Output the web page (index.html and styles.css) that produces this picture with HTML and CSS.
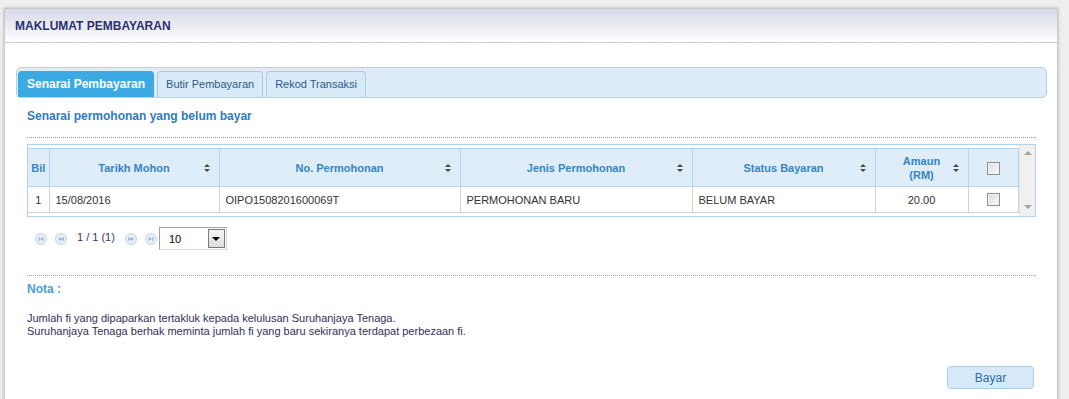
FILE: index.html
```html
<!DOCTYPE html>
<html lang="ms">

<head>
    <meta charset="UTF-8">
    <title>Maklumat Pembayaran</title>
    <link rel="stylesheet" href="styles.css">
</head>

<body>
    <div class="panel">
        <!-- Panel header -->
        <div class="panel-header">MAKLUMAT PEMBAYARAN</div>

        <div class="panel-body">
            <!-- Tabs -->
            <div class="tabs">
                <div class="tab active">Senarai Pembayaran</div>
                <div class="tab">Butir Pembayaran</div>
                <div class="tab">Rekod Transaksi</div>
            </div>

            <div class="tab-content">
                <h3 class="section-title">Senarai permohonan yang belum bayar</h3>

                <!-- Grid -->
                <div class="grid-wrap">
                    <div class="grid-body">
                        <table class="grid">
                            <colgroup>
                                <col style="width:21px">
                                <col style="width:170px">
                                <col style="width:241px">
                                <col style="width:232px">
                                <col style="width:183px">
                                <col style="width:93px">
                                <col style="width:50px">
                            </colgroup>
                            <thead>
                                <tr>
                                    <th>Bil</th>
                                    <th class="sortable">Tarikh Mohon<span class="sort"></span></th>
                                    <th class="sortable">No. Permohonan<span class="sort"></span></th>
                                    <th class="sortable">Jenis Permohonan<span class="sort"></span></th>
                                    <th class="sortable">Status Bayaran<span class="sort"></span></th>
                                    <th class="sortable">Amaun<br>(RM)<span class="sort"></span></th>
                                    <th><span class="check"></span></th>
                                </tr>
                            </thead>
                            <tbody>
                                <tr>
                                    <td class="center">1</td>
                                    <td>15/08/2016</td>
                                    <td>OIPO1508201600069T</td>
                                    <td>PERMOHONAN BARU</td>
                                    <td>BELUM BAYAR</td>
                                    <td class="center">20.00</td>
                                    <td class="center"><span class="check"></span></td>
                                </tr>
                            </tbody>
                        </table>
                    </div>
                    <div class="scrollbar">
                        <span class="arrow-up"></span>
                        <span class="arrow-down"></span>
                    </div>
                </div>

                <!-- Pager -->
                <div class="pager">
                    <span class="pg-btn">
                        <svg width="12" height="12" viewBox="0 0 12 12"><circle cx="6" cy="6" r="5.5" fill="#e6eef8" stroke="#c2d5ea"/><path d="M3.6 4h1.1v4H3.6zM8.4 4v4L5 6z" fill="#98b3d1"/></svg>
                    </span>
                    <span class="pg-btn">
                        <svg width="12" height="12" viewBox="0 0 12 12"><circle cx="6" cy="6" r="5.5" fill="#e6eef8" stroke="#c2d5ea"/><path d="M6 4v4L3.1 6zM8.9 4v4L6 6z" fill="#98b3d1"/></svg>
                    </span>
                    <span class="pg-text">1 / 1 (1)</span>
                    <span class="pg-btn">
                        <svg width="12" height="12" viewBox="0 0 12 12"><circle cx="6" cy="6" r="5.5" fill="#e6eef8" stroke="#c2d5ea"/><path d="M3.1 4v4L6 6zM6 4v4l2.9-2z" fill="#98b3d1"/></svg>
                    </span>
                    <span class="pg-btn">
                        <svg width="12" height="12" viewBox="0 0 12 12"><circle cx="6" cy="6" r="5.5" fill="#e6eef8" stroke="#c2d5ea"/><path d="M3.6 4v4L7 6zM7.3 4h1.1v4H7.3z" fill="#98b3d1"/></svg>
                    </span>
                    <div class="select">
                        <span class="select-value">10</span>
                        <span class="select-btn"></span>
                    </div>
                </div>

                <!-- Nota -->
                <div class="nota">
                    <h4>Nota :</h4>
                    <p>Jumlah fi yang dipaparkan tertakluk kepada kelulusan Suruhanjaya Tenaga.<br>
                        Suruhanjaya Tenaga berhak meminta jumlah fi yang baru sekiranya terdapat perbezaan fi.</p>
                </div>

                <div class="actions">
                    <button class="btn">Bayar</button>
                </div>
            </div>
        </div>
    </div>
</body>

</html>
```

FILE: styles.css
```css
/* Global */
* {
    margin: 0;
    padding: 0;
    box-sizing: border-box;
}

body {
    background: #eeeeee;
    font-family: "Liberation Sans", Arial, sans-serif;
    font-size: 11px;
    color: #333;
}

/* Panel */
.panel {
    margin: 8px 11px 0 4px;
    background: #fff;
    border: 1px solid #c9c9c9;
    border-bottom: none;
    box-shadow: 0 0 3px rgba(0, 0, 0, 0.25);
    height: 400px;
}

.panel-header {
    height: 34px;
    line-height: 34px;
    padding-left: 10px;
    font-size: 12px;
    font-weight: bold;
    color: #2b3170;
    background: linear-gradient(#d6d9e6, #ffffff);
    border-bottom: 1px dashed #c8c8c8;
}

.panel-body {
    padding: 24px 10px 0 11px;
}

/* Tabs */
.tabs {
    display: flex;
    gap: 3px;
    height: 31px;
    padding: 3px 0 0 1px;
    background: #ddecf8;
    border: 1px solid #b3d3ec;
    border-radius: 5px;
}

.tab {
    height: 26px;
    line-height: 25px;
    padding: 0 8px;
    font-size: 11px;
    color: #2c5a8a;
    background: #d8eaf8;
    border: 1px solid #a9cce9;
    border-bottom: none;
    border-radius: 4px 4px 0 0;
}

.tab.active {
    padding: 0 8px;
    font-size: 12px;
    font-weight: bold;
    color: #fff;
    background: #3baae3;
    border-color: #3baae3;
}

.tab-content {
    padding: 10px 11px 0 11px;
}

.section-title {
    font-size: 12px;
    line-height: 16px;
    color: #2f7bbd;
    padding-bottom: 13px;
    border-bottom: 1px dotted #9a9a9a;
}

/* Grid */
.grid-wrap {
    display: flex;
    margin-top: 6px;
    border: 1px solid #b0d2ec;
}

.grid-body {
    flex: 1;
    padding: 3px 0;
}

.grid {
    width: 990px;
    border-collapse: collapse;
    table-layout: fixed;
}

.grid th {
    position: relative;
    height: 38px;
    font-size: 11px;
    font-weight: bold;
    color: #3386c6;
    background: #deedf8;
    border-top: 1px solid #b4d3ec;
    border-bottom: 1px solid #b4d3ec;
    border-right: 1px solid #b4d3ec;
    text-align: center;
    line-height: 14px;
}

.grid td {
    height: 26px;
    padding: 0 6px;
    border-right: 1px solid #d2d2d2;
    border-bottom: 1px solid #d2d2d2;
    white-space: nowrap;
}

.grid td.center {
    text-align: center;
    padding: 0;
}

.sort {
    position: absolute;
    right: 8px;
    top: 15px;
    width: 7px;
    height: 8px;
}

.sort::before,
.sort::after {
    content: "";
    position: absolute;
    left: 0;
    border-left: 3.5px solid transparent;
    border-right: 3.5px solid transparent;
}

.sort::before {
    top: 0;
    border-bottom: 3.5px solid #4a4a4a;
}

.sort::after {
    bottom: 0;
    border-top: 3.5px solid #4a4a4a;
}

.check {
    display: inline-block;
    width: 13px;
    height: 13px;
    vertical-align: middle;
    border: 1px solid #8f8f8f;
    background: linear-gradient(135deg, #dcdcdc, #fbfbfb);
    box-shadow: inset 0 0 0 1px #f4f4f4;
}

.scrollbar {
    width: 16px;
    background: #f0f0f0;
    border-left: 1px solid #e4e4e4;
    display: flex;
    flex-direction: column;
    justify-content: space-between;
    align-items: center;
    padding: 6px 0 7px;
}

.arrow-up,
.arrow-down {
    width: 0;
    height: 0;
    border-left: 4px solid transparent;
    border-right: 4px solid transparent;
}

.arrow-up {
    border-bottom: 4px solid #a6a6a6;
}

.arrow-down {
    border-top: 4px solid #a6a6a6;
}

/* Pager */
.pager {
    display: flex;
    align-items: center;
    margin-top: 10px;
    padding-left: 8px;
    height: 23px;
}

.pg-btn {
    display: flex;
    margin-right: 8px;
}

.pg-text {
    margin: 0 10px 4px 2px;
    font-size: 11px;
    color: #3d3466;
}

.select {
    display: flex;
    width: 68px;
    height: 23px;
    margin-left: -6px;
    border: 1px solid #a0a0a0;
    border-right-color: #d8d8d8;
    border-bottom-color: #d8d8d8;
    background: #fff;
}

.select-value {
    flex: 1;
    padding: 5px 0 0 9px;
    font-size: 11px;
    color: #000;
}

.select-btn {
    width: 17px;
    margin: 1px;
    border: 1px solid #7a7a7a;
    background: linear-gradient(#f6f6f6, #dcdcdc);
    position: relative;
}

.select-btn::after {
    content: "";
    position: absolute;
    left: 3px;
    top: 7px;
    border-left: 4px solid transparent;
    border-right: 4px solid transparent;
    border-top: 4px solid #000;
}

/* Nota */
.nota {
    margin-top: 25px;
    border-top: 1px dotted #9a9a9a;
}

.nota h4 {
    margin-top: 4px;
    font-size: 12px;
    line-height: 18px;
    color: #46a0dc;
}

.nota p {
    margin-top: 14px;
    font-size: 11px;
    line-height: 13px;
    color: #352f55;
}

.actions {
    display: flex;
    justify-content: flex-end;
    margin-top: 28px;
    padding-right: 2px;
}

.btn {
    width: 87px;
    height: 23px;
    font-family: "Liberation Sans", Arial, sans-serif;
    font-size: 12px;
    color: #2b6ea8;
    background: #d7e9f8;
    border: 1px solid #aacde9;
    border-radius: 4px;
    cursor: pointer;
}
```
